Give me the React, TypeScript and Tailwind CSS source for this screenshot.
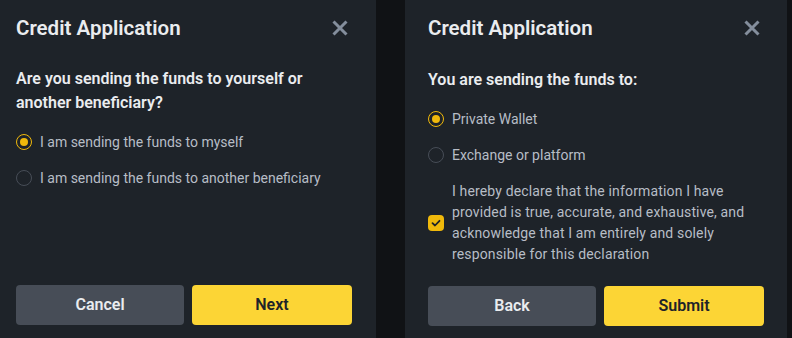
import React from "react";

const font = { fontFamily: 'Roboto, "Liberation Sans", sans-serif' };

function CloseIcon() {
  return (
    <svg width="24" height="24" viewBox="0 0 24 24" className="shrink-0">
      <path d="M5.5 5.5 L18.5 18.5 M18.5 5.5 L5.5 18.5" stroke="#848e9c" strokeWidth="3" strokeLinecap="butt" fill="none" />
    </svg>
  );
}

function Radio({ checked, label }: { checked?: boolean; label: string }) {
  return (
    <div className="flex h-5 items-center gap-2">
      <span
        className={
          checked
            ? "flex h-4 w-4 shrink-0 items-center justify-center rounded-full border border-[#f0b90b]"
            : "flex h-4 w-4 shrink-0 items-center justify-center rounded-full border border-[#474d57]"
        }
      >
        {checked && <span className="h-2 w-2 rounded-full bg-[#f0b90b]" />}
      </span>
      <span className="text-sm text-[#b7bdc6]">{label}</span>
    </div>
  );
}

function Buttons({ left, right }: { left: string; right: string }) {
  return (
    <div className="mt-auto flex gap-2">
      <button className="h-10 flex-1 rounded bg-[#474d57] text-base font-semibold text-[#eaecef]">{left}</button>
      <button className="h-10 w-[160px] rounded bg-[#fcd535] text-base font-semibold text-[#1e2329]">{right}</button>
    </div>
  );
}

export default function App() {
  return (
    <div className="flex h-[338px] w-[792px] overflow-hidden bg-[#101215]" style={font}>
      <div className="flex h-full w-[376px] shrink-0 flex-col bg-[#1e2329] pb-[13px] pl-4 pr-6">
        <div className="flex h-14 items-center justify-between">
          <h1 className="text-[20.5px] font-semibold text-[#eaecef]">Credit Application</h1>
          <CloseIcon />
        </div>
        <p className="mt-[11px] text-base font-semibold leading-6 text-[#eaecef]">
          Are you sending the funds to yourself or
          <br />
          another beneficiary?
        </p>
        <div className="mt-[17px] flex flex-col gap-4">
          <Radio checked label="I am sending the funds to myself" />
          <Radio label="I am sending the funds to another beneficiary" />
        </div>
        <Buttons left="Cancel" right="Next" />
      </div>
      <div className="w-[29px] shrink-0" />
      <div className="flex h-full w-[382px] shrink-0 flex-col bg-[#1e2329] px-[23px] pb-[12px]">
        <div className="flex h-14 items-center justify-between">
          <h1 className="text-[20.5px] font-semibold text-[#eaecef]">Credit Application</h1>
          <CloseIcon />
        </div>
        <p className="mt-[12px] text-base font-semibold leading-6 text-[#eaecef]">You are sending the funds to:</p>
        <div className="mt-[17px] flex flex-col gap-4">
          <Radio checked label="Private Wallet" />
          <Radio label="Exchange or platform" />
        </div>
        <div className="mt-4 flex items-center gap-2">
          <span className="flex h-4 w-4 shrink-0 items-center justify-center rounded-sm bg-[#f0b90b]">
            <svg width="12" height="12" viewBox="0 0 12 12">
              <path d="M2.5 6.2 L5 8.5 L9.5 3.8" stroke="#1e2329" strokeWidth="1.8" fill="none" strokeLinecap="round" strokeLinejoin="round" />
            </svg>
          </span>
          <p className="text-sm leading-[21px] tracking-[0.15px] text-[#b7bdc6]">
            I hereby declare that the information I have
            <br />
            provided is true, accurate, and exhaustive, and
            <br />
            acknowledge that I am entirely and solely
            <br />
            responsible for this declaration
          </p>
        </div>
        <Buttons left="Back" right="Submit" />
      </div>
    </div>
  );
}
